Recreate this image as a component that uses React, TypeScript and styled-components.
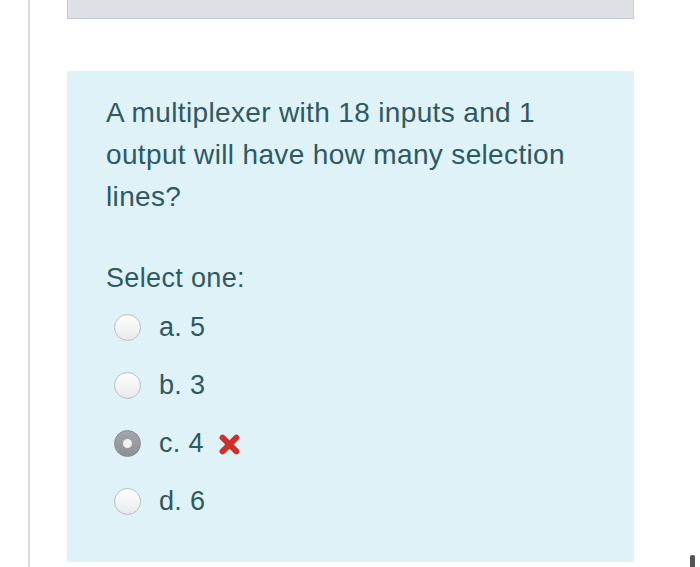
import styled, { createGlobalStyle } from "styled-components";

const GlobalStyle = createGlobalStyle`
  html, body { margin: 0; padding: 0; background: #ffffff; }
  body { font-family: "Liberation Sans", Arial, Helvetica, sans-serif; }
`;

const Page = styled.div`
  width: 700px;
  height: 567px;
  overflow: hidden;
  position: relative;
  background: #fff;
`;

const Column = styled.div`
  margin-left: 28px;
  width: 643px;
  height: 567px;
  border-left: 2px solid #dcdcdc;
  border-right: 2px solid #dcdcdc;
  padding-left: 37px;
  box-sizing: content-box;
`;

const InfoBox = styled.div`
  width: 565px;
  height: 18px;
  background: #dde1e5;
  border: 1px solid #c5c9cd;
  border-top: none;
`;

const Formulation = styled.div`
  margin-top: 52px;
  width: 528px;
  height: 470px;
  background: #def2f8;
  padding: 21px 0 0 39px;
  color: #2f5962;
  font-size: 28px;
  letter-spacing: 0.35px;
`;

const QuestionText = styled.p`
  margin: 0;
  line-height: 42px;
  width: 480px;
`;

const Prompt = styled.div`
  margin-top: 40px;
  line-height: 40px;
  font-size: 27px;
`;

const Answers = styled.div`
  display: flex;
  flex-direction: column;
`;

const Row = styled.label`
  display: flex;
  align-items: center;
  height: 58px;
  padding-left: 8px;
  gap: 18px;
  font-size: 27px;
`;

const Radio = styled.span<{ $checked?: boolean }>`
  width: 27px;
  height: 27px;
  border-radius: 50%;
  box-sizing: border-box;
  display: flex;
  align-items: center;
  justify-content: center;
  border: 1.5px solid ${({ $checked }) => ($checked ? "#858a8f" : "#b9bdc1")};
  background: ${({ $checked }) =>
    $checked
      ? "linear-gradient(#a3a7ab, #8d9195)"
      : "linear-gradient(#ffffff, #e6e9ec)"};
`;

const Dot = styled.span`
  width: 9px;
  height: 9px;
  border-radius: 50%;
  background: #eef0f2;
`;

const Wrong = styled.svg`
  margin-left: -4px;
  margin-top: 2px;
`;

const ScrollThumb = styled.div`
  position: absolute;
  left: 690px;
  top: 555px;
  width: 5px;
  height: 14px;
  border-radius: 2px;
  background: #555;
`;

const answers = [
  { label: "a. 5" },
  { label: "b. 3" },
  { label: "c. 4", checked: true, wrong: true },
  { label: "d. 6" },
];

export default function App() {
  return (
    <>
      <GlobalStyle />
      <Page>
        <Column>
          <InfoBox />
          <Formulation>
            <QuestionText>
              A multiplexer with 18 inputs and 1 output will have how many
              selection lines?
            </QuestionText>
            <Prompt>Select one:</Prompt>
            <Answers>
              {answers.map((a, i) => (
                <Row key={i}>
                  <Radio $checked={a.checked}>{a.checked && <Dot />}</Radio>
                  <span>{a.label}</span>
                  {a.wrong && (
                    <Wrong width="23" height="23" viewBox="0 0 20 20">
                      <path
                        d="M4 4 L16 16 M16 4 L4 16"
                        stroke="#d22f27"
                        strokeWidth="5.2"
                        strokeLinecap="round"
                      />
                    </Wrong>
                  )}
                </Row>
              ))}
            </Answers>
          </Formulation>
        </Column>
        <ScrollThumb />
      </Page>
    </>
  );
}
